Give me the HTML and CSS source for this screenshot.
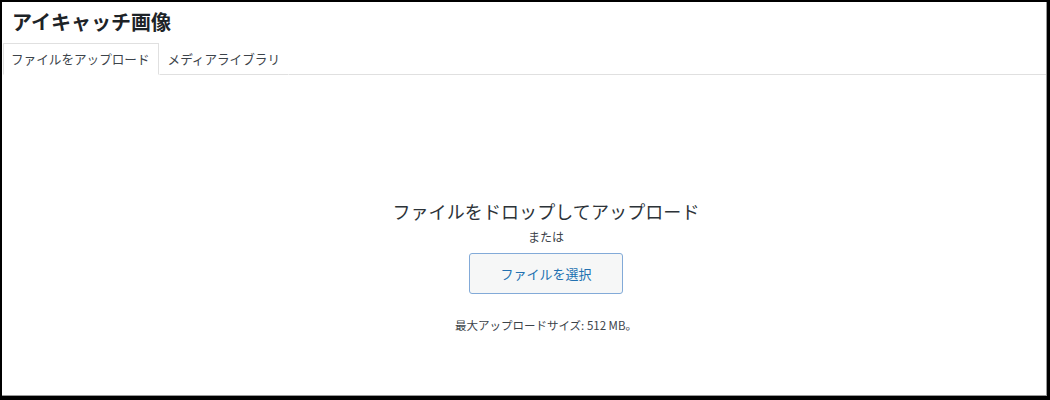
FILE: index.html
```html
<!DOCTYPE html>
<html lang="ja">
<head>
    <meta charset="UTF-8">
    <title>アイキャッチ画像</title>
    <link rel="stylesheet" href="styles.css">
</head>
<body>
    <div class="frame">
        <div class="modal">
            <h1 class="modal-title">アイキャッチ画像</h1>
            <nav class="tabs">
                <span class="tab active">ファイルをアップロード</span>
                <span class="tab">メディアライブラリ</span>
                <span class="tab-rest"></span>
            </nav>
            <main class="uploader">
                <p class="drop-text">ファイルをドロップしてアップロード</p>
                <p class="or-text">または</p>
                <button class="select-btn" type="button">ファイルを選択</button>
                <p class="max-size">最大アップロードサイズ: 512 MB。</p>
            </main>
        </div>
    </div>
</body>
</html>
```

FILE: styles.css
```css
html, body {
    margin: 0;
    padding: 0;
    background: #fff;
}

body {
    font-family: "Noto Sans CJK JP", "Noto Sans", sans-serif;
    color: #1d2327;
}

.frame {
    width: 1050px;
    height: 400px;
    box-sizing: border-box;
    border-style: solid;
    border-color: #000;
    border-width: 2px 3px 4px 2px;
}

.modal {
    height: 100%;
    box-sizing: border-box;
    border-right: 1px solid #999;
    border-bottom: 1px solid #999;
    display: flex;
    flex-direction: column;
}

.modal-title {
    margin: 0;
    padding: 6px 10px 0;
    height: 36px;
    font-size: 20px;
    font-weight: 700;
    line-height: 28px;
    box-sizing: border-box;
}

.tabs {
    display: flex;
    height: 37px;
    padding-top: 5px;
    box-sizing: border-box;
    padding-left: 1px;
}

.tab {
    font-size: 12.6px;
    color: #3c434a;
    padding: 0 8px;
    line-height: 30px;
    border: 1px solid transparent;
    border-bottom-color: #e0e0e0;
}

.tab.active {
    border-color: #e0e0e0;
    border-bottom-color: #fff;
    padding: 0 8px 0 7px;
}

.tab-rest {
    flex: 1;
    border-bottom: 1px solid #e0e0e0;
}

.uploader {
    flex: 1;
    display: flex;
    flex-direction: column;
    align-items: center;
    padding-left: 44px;
    padding-top: 123px;
}

.drop-text {
    margin: 0;
    font-size: 18px;
    line-height: 26px;
    color: #2c3338;
    letter-spacing: 0.1px;
}

.or-text {
    margin: 4px 0 0;
    font-size: 12px;
    line-height: 18px;
    color: #3c434a;
}

.select-btn {
    margin-top: 7px;
    width: 154px;
    height: 41px;
    font-family: inherit;
    font-size: 13px;
    color: #2271b1;
    background: #f6f7f7;
    border: 1px solid #82aad8;
    border-radius: 3px;
}

.max-size {
    margin: 22px 0 0;
    font-size: 11.5px;
    line-height: 18px;
    color: #3c434a;
}
```
